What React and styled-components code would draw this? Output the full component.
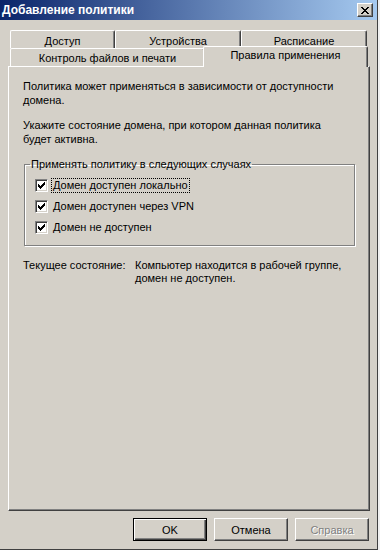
import styled, { createGlobalStyle } from "styled-components";

const GlobalStyle = createGlobalStyle`
  html, body {
    margin: 0;
    padding: 0;
    background: #f0f0f0;
  }
  body {
    font-family: "Liberation Sans", Arial, sans-serif;
    font-size: 11px;
    color: #000;
  }
`;

const Window = styled.div`
  width: 378px;
  height: 550px;
  box-sizing: border-box;
  display: flex;
  flex-direction: column;
  background: #d4d0c8;
  border-right: 1px solid #404040;
  border-bottom: 1px solid #404040;
`;

const TitleBar = styled.div`
  height: 20px;
  flex: none;
  display: flex;
  align-items: center;
  padding: 0 4px 0 2px;
  background: linear-gradient(to right, #0a246a, #a6caf0);
`;

const Title = styled.span`
  color: #fff;
  font-weight: bold;
  font-size: 12px;
`;

const CloseButton = styled.div`
  margin-left: auto;
  width: 16px;
  height: 14px;
  box-sizing: border-box;
  display: flex;
  align-items: center;
  justify-content: center;
  background: #d4d0c8;
  border-top: 1px solid #fff;
  border-left: 1px solid #fff;
  border-right: 1px solid #404040;
  border-bottom: 1px solid #404040;
  box-shadow: inset -1px -1px #808080;
`;

const Body = styled.div`
  flex: 1;
  display: flex;
  flex-direction: column;
  padding: 10px 7px 8px 8px;
`;

const TabRow = styled.div`
  display: flex;
  height: 18px;
  padding: 0 2px;
`;

const Tab = styled.div`
  width: ${(p) => p.$w}px;
  height: ${(p) => (p.$active ? 21 : 18)}px;
  margin: ${(p) => (p.$active ? "-2px 0 -1px -2px" : "0")};
  box-sizing: border-box;
  padding-top: ${(p) => p.$pt}px;
  line-height: 13px;
  text-align: center;
  background: #d4d0c8;
  border-top: 1px solid #fff;
  border-left: 1px solid #fff;
  border-right: 1px solid #404040;
  border-radius: 2px 2px 0 0;
  box-shadow: inset -1px 0 #808080;
  z-index: ${(p) => (p.$active ? 1 : 0)};
`;

const Panel = styled.div`
  flex: 1;
  box-sizing: border-box;
  padding: 12px 14px 0 14px;
  border-top: 1px solid #fff;
  border-left: 1px solid #fff;
  border-right: 1px solid #404040;
  border-bottom: 1px solid #404040;
  box-shadow: inset -1px -1px #808080;
`;

const Para = styled.p`
  margin: 0 0 11px;
  line-height: 14px;
`;

const Group = styled.fieldset`
  margin: 0 0 0 1px;
  width: 331px;
  box-sizing: border-box;
  padding: 6px 10px 9px 10px;
  border: 1px solid #808080;
  box-shadow: 1px 1px #fff, inset 1px 1px #fff;
  display: flex;
  flex-direction: column;
  gap: 4px;
`;

const Legend = styled.legend`
  padding: 0 1px;
  margin-left: -5px;
  line-height: 14px;
`;

const CheckRow = styled.label`
  display: flex;
  align-items: center;
  gap: 3px;
  height: 17px;
`;

const Box = styled.span`
  width: 13px;
  height: 13px;
  box-sizing: border-box;
  display: flex;
  align-items: center;
  justify-content: center;
  background: #fff;
  border-top: 1px solid #808080;
  border-left: 1px solid #808080;
  border-right: 1px solid #fff;
  border-bottom: 1px solid #fff;
  box-shadow: inset 1px 1px #404040, inset -1px -1px #d4d0c8;
`;

const CheckText = styled.span`
  padding: 0 1px;
  line-height: 13px;
  border: 1px dotted ${(p) => (p.$focus ? "#000" : "transparent")};
`;

const Status = styled.div`
  margin-top: 13px;
  display: grid;
  grid-template-columns: 112px 1fr;
  line-height: 13px;
`;

const ButtonBar = styled.div`
  display: flex;
  justify-content: flex-end;
  gap: 7px;
  padding-top: 7px;
  padding-right: 1px;
`;

const Button = styled.div`
  width: 74px;
  height: 23px;
  box-sizing: border-box;
  display: flex;
  align-items: center;
  justify-content: center;
  background: #d4d0c8;
  border: 1px solid;
  border-color: ${(p) => (p.$default ? "#000" : "#fff #404040 #404040 #fff")};
  box-shadow: ${(p) =>
    p.$default
      ? "inset 1px 1px #fff, inset -1px -1px #404040, inset -2px -2px #808080"
      : "inset -1px -1px #808080"};
  color: ${(p) => (p.$disabled ? "#808080" : "#000")};
  text-shadow: ${(p) => (p.$disabled ? "1px 1px #fff" : "none")};
`;

const CloseGlyph = () => (
  <svg width="8" height="7" viewBox="0 0 8 7" shapeRendering="crispEdges">
    <path
      fill="#000"
      d="M0 0h2v1H0zM6 0h2v1H6zM1 1h2v1H1zM5 1h2v1H5zM2 2h4v1H2zM3 3h2v1H3zM2 4h4v1H2zM1 5h2v1H1zM5 5h2v1H5zM0 6h2v1H0zM6 6h2v1H6z"
    />
  </svg>
);

// classic 7x7 check mark, one rect per column
const CheckGlyph = () => (
  <svg width="7" height="7" viewBox="0 0 7 7" shapeRendering="crispEdges">
    <path
      fill="#000"
      d="M0 2h1v3H0zM1 3h1v3H1zM2 4h1v3H2zM3 3h1v3H3zM4 2h1v3H4zM5 1h1v3H5zM6 0h1v3H6z"
    />
  </svg>
);

const options = [
  { id: "local", label: "Домен доступен локально", focus: true },
  { id: "vpn", label: "Домен доступен через VPN" },
  { id: "none", label: "Домен не доступен" },
];

export default function App() {
  return (
    <>
      <GlobalStyle />
      <Window>
        <TitleBar>
          <Title>Добавление политики</Title>
          <CloseButton>
            <CloseGlyph />
          </CloseButton>
        </TitleBar>
        <Body>
          <TabRow>
            <Tab $w={105} $pt={4}>Доступ</Tab>
            <Tab $w={126} $pt={4}>Устройства</Tab>
            <Tab $w={126} $pt={4}>Расписание</Tab>
          </TabRow>
          <TabRow>
            <Tab $w={196} $pt={3}>Контроль файлов и печати</Tab>
            <Tab $w={166} $pt={2} $active>
              Правила применения
            </Tab>
          </TabRow>
          <Panel>
            <Para>
              Политика может применяться в зависимости от доступности
              <br />
              домена.
            </Para>
            <Para>
              Укажите состояние домена, при котором данная политика
              <br />
              будет активна.
            </Para>
            <Group>
              <Legend>Применять политику в следующих случаях</Legend>
              {options.map((o) => (
                <CheckRow key={o.id}>
                  <Box>
                    <CheckGlyph />
                  </Box>
                  <CheckText $focus={o.focus}>{o.label}</CheckText>
                </CheckRow>
              ))}
            </Group>
            <Status>
              <span>Текущее состояние:</span>
              <span>
                Компьютер находится в рабочей группе,
                <br />
                домен не доступен.
              </span>
            </Status>
          </Panel>
          <ButtonBar>
            <Button $default>OK</Button>
            <Button>Отмена</Button>
            <Button $disabled>Справка</Button>
          </ButtonBar>
        </Body>
      </Window>
    </>
  );
}
